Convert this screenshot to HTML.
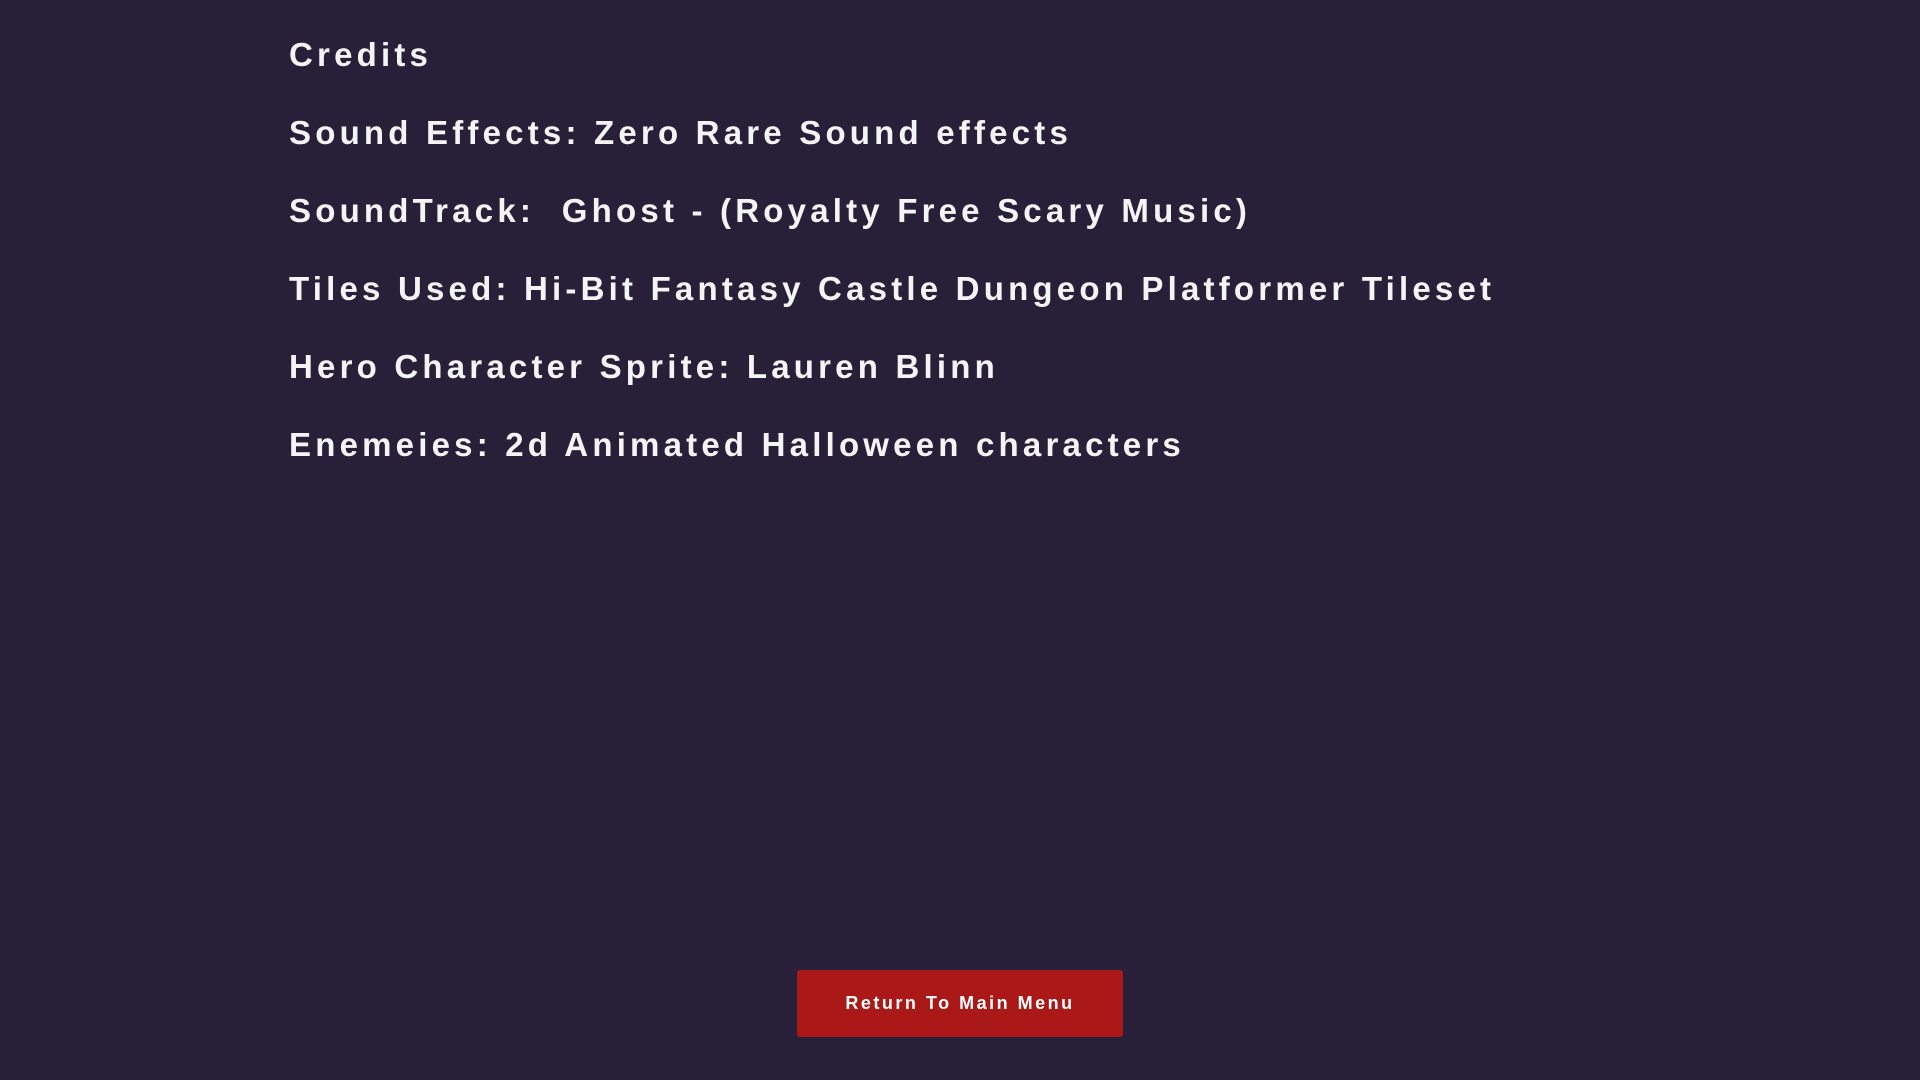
<!DOCTYPE html>
<html><head><meta charset="utf-8"><style>
html,body{margin:0;width:1920px;height:1080px;background:#282039;overflow:hidden}
.l{position:absolute;left:289px;color:#f4f4f4;font:bold 33px "Liberation Sans",sans-serif;letter-spacing:4.2px;white-space:pre;line-height:40px}
.b{position:absolute;left:797px;top:970px;width:326px;height:67px;background:#ab1818;border-radius:3px;color:#fff;font:bold 18px "Liberation Sans",sans-serif;letter-spacing:2.5px;text-align:center;line-height:67px}
</style></head><body>
<div class="l" style="top:35px">Credits</div>
<div class="l" style="top:113px">Sound Effects: Zero Rare Sound effects</div>
<div class="l" style="top:191px">SoundTrack:  Ghost - (Royalty Free Scary Music)</div>
<div class="l" style="top:269px">Tiles Used: Hi-Bit Fantasy Castle Dungeon Platformer Tileset</div>
<div class="l" style="top:347px">Hero Character Sprite: Lauren Blinn</div>
<div class="l" style="top:425px">Enemeies: 2d Animated Halloween characters</div>
<div class="b">Return To Main Menu</div>
</body></html>
